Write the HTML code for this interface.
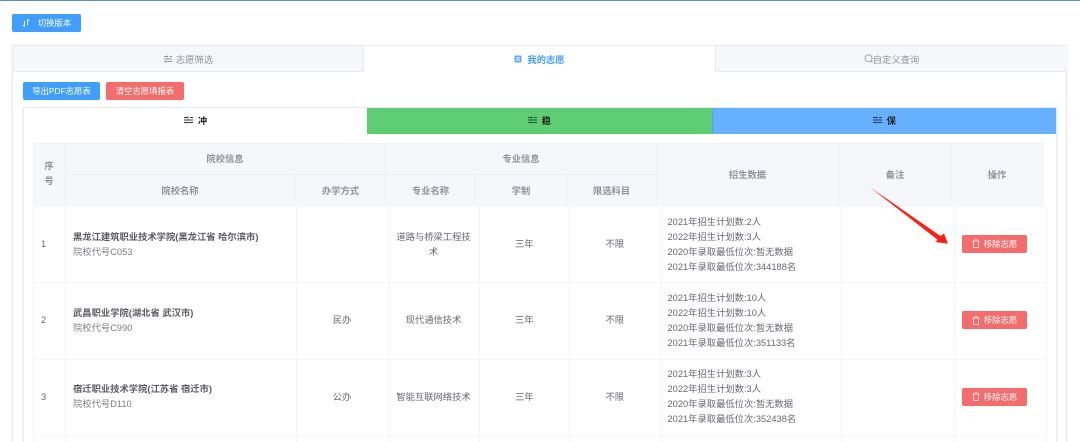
<!DOCTYPE html>
<html lang="zh-CN">
<head>
<meta charset="utf-8">
<title>我的志愿</title>
<style>
*{box-sizing:border-box;margin:0;padding:0}
html,body{width:1080px;height:442px;overflow:hidden;background:#fff}
body{position:relative;font-family:"Liberation Sans","Noto Sans CJK SC",sans-serif;font-size:9.3px;color:#66686e}
#w{position:absolute;left:0;top:0;width:1080px;height:442px;overflow:hidden;filter:blur(.35px)}
.a{position:absolute}
.bar{left:0;top:0;width:1080px;height:1px;background:#5a93bf}
.btn{position:absolute;color:#fff;border-radius:2px;display:flex;align-items:center;justify-content:center;font-size:8.4px;height:18px}
.blue{background:#409eff}
.red{background:#f56c6c}
.outer{left:12px;top:45px;width:1055px;height:397px;border:1px solid #e8eaef;border-bottom:0;box-shadow:0 1px 3px rgba(0,0,0,.08);background:#fff}
.tab{position:absolute;top:46px;height:26px;display:flex;align-items:center;justify-content:center;font-size:9.3px;color:#909399;background:#f5f7fa;border-bottom:1px solid #e8eaef}
.tab svg{margin-right:3px}
.inner{left:23px;top:107px;width:1034px;height:335px;border:1px solid #e8eaef;border-bottom:0;box-shadow:0 1px 3px rgba(0,0,0,.08);background:#fff}
.sub{position:absolute;top:108px;height:26px;padding-bottom:2px;display:flex;align-items:center;justify-content:center;font-size:9.3px;font-weight:bold;color:#222}
.sub svg{margin-right:5px}
table{position:absolute;border-collapse:collapse;table-layout:fixed}
th,td{text-align:center;border:1px solid #f5f6f9;font-weight:normal}
.h{left:33px;top:143px;width:1009px;background:#f5f7fa;color:#909399}
.h th{font-weight:bold;border-color:#f0f2f6;font-size:9.3px;padding-bottom:2px}
.b{left:33px;top:206px;width:1013px}
.b td{height:76.3px;line-height:15px;padding:0;vertical-align:middle;border-color:#f5f6fa}
.b tr.e td{height:7px;border-bottom:0;line-height:0;font-size:0}
.b td.l{text-align:left;padding-left:7px}
.n{font-weight:bold;color:#5a5c62}
.c{color:#7c7e83}
.x{position:absolute;width:65px;height:18px;left:962px;border-radius:2px;background:#f56c6c;color:#fff;font-size:8.4px;display:flex;align-items:center;justify-content:center}
.x svg{margin-right:4px}
</style>
</head>
<body>
<div id="w">
<div class="a bar"></div>
<div class="btn blue" style="left:12px;top:14px;width:69px">
  <svg width="8" height="8" viewBox="0 0 8 8" style="margin-right:8px" fill="none" stroke="#fff" stroke-width=".9"><path d="M2.5 2V7.5L1 6M5.5 6V.5L7 2"/></svg>切换版本
</div>

<div class="a outer"></div>
<div class="tab" style="left:13px;width:351px;border-right:1px solid #e8eaef">
  <svg width="10" height="8" viewBox="0 0 10 8" stroke="#909399" stroke-width=".9"><path d="M1 1.5H5M6.5 1.5H9M4.5 .5V2.5M1 4H9M1 6.5H3M4.5 6.5H9M3.5 5.5V7.5"/></svg>志愿筛选
</div>
<div class="tab" style="left:364px;width:351px;background:#fff;border-bottom:0;color:#409eff;font-weight:bold">
  <svg width="8" height="8" viewBox="0 0 8 8" style="margin-right:5px"><rect x=".5" y=".5" width="7" height="7" rx="1" fill="#5ea8f5"/><path d="M2 3H6M2 5H6" stroke="#fff"/></svg>我的志愿
</div>
<div class="tab" style="left:715px;width:352px;border-left:1px solid #e8eaef">
  <svg width="9" height="9" viewBox="0 0 9 9" fill="none" stroke="#a0a3a8" style="margin-right:0"><circle cx="4.5" cy="4.2" r="3.5"/><path d="M7 7L8.5 8.5"/></svg>自定义查询
</div>

<div class="btn blue" style="left:23px;top:82px;width:77px">导出PDF志愿表</div>
<div class="btn red" style="left:106px;top:82px;width:78px">清空志愿填报表</div>

<div class="a inner"></div>
<div class="sub" style="left:24px;width:343px;background:#fff">
  <svg width="9" height="8" viewBox="0 0 9 8" stroke="#333" stroke-width=".9"><path d="M0 1.5H4.5M6 1.5H9M4 .5V2.5M0 4H9M0 6.5H2.5M4 6.5H9M3 5.5V7.5"/></svg>冲
</div>
<div class="sub" style="left:367px;width:344.5px;background:#5ecd73">
  <svg width="9" height="8" viewBox="0 0 9 8" stroke="#1d4a27" stroke-width=".9"><path d="M0 1.5H4.5M6 1.5H9M4 .5V2.5M0 4H9M0 6.5H2.5M4 6.5H9M3 5.5V7.5"/></svg>稳
</div>
<div class="sub" style="left:711.5px;width:344.5px;background:#66b1ff;border-left:1px solid #5aa0ea">
  <svg width="9" height="8" viewBox="0 0 9 8" stroke="#1b3a5c" stroke-width=".9"><path d="M0 1.5H4.5M6 1.5H9M4 .5V2.5M0 4H9M0 6.5H2.5M4 6.5H9M3 5.5V7.5"/></svg>保
</div>

<table class="h">
  <colgroup><col style="width:31px"><col style="width:231px"><col style="width:90px"><col style="width:90px"><col style="width:91px"><col style="width:90px"><col style="width:182px"><col style="width:113px"><col style="width:91px"></colgroup>
  <tr style="height:31px">
    <th rowspan="2" style="line-height:15px">序<br>号</th>
    <th colspan="2">院校信息</th>
    <th colspan="3">专业信息</th>
    <th rowspan="2">招生数据</th>
    <th rowspan="2">备注</th>
    <th rowspan="2">操作</th>
  </tr>
  <tr style="height:32px">
    <th>院校名称</th><th>办学方式</th><th>专业名称</th><th>学制</th><th>限选科目</th>
  </tr>
</table>

<table class="b">
  <colgroup><col style="width:32px"><col style="width:230.5px"><col style="width:92px"><col style="width:91px"><col style="width:90.5px"><col style="width:90.5px"><col style="width:181.5px"><col style="width:114px"><col style="width:91px"></colgroup>
  <tr>
    <td class="l">1</td>
    <td class="l"><div class="n">黑龙江建筑职业技术学院(黑龙江省 哈尔滨市)</div><div class="c">院校代号C053</div></td>
    <td></td>
    <td style="padding:0 6px">道路与桥梁工程技术</td>
    <td>三年</td><td>不限</td>
    <td class="l">2021年招生计划数:2人<br>2022年招生计划数:3人<br>2020年录取最低位次:暂无数据<br>2021年录取最低位次:344188名</td>
    <td></td><td></td>
  </tr>
  <tr>
    <td class="l">2</td>
    <td class="l"><div class="n">武昌职业学院(湖北省 武汉市)</div><div class="c">院校代号C990</div></td>
    <td>民办</td>
    <td>现代通信技术</td>
    <td>三年</td><td>不限</td>
    <td class="l">2021年招生计划数:10人<br>2022年招生计划数:10人<br>2020年录取最低位次:暂无数据<br>2021年录取最低位次:351133名</td>
    <td></td><td></td>
  </tr>
  <tr>
    <td class="l">3</td>
    <td class="l"><div class="n">宿迁职业技术学院(江苏省 宿迁市)</div><div class="c">院校代号D110</div></td>
    <td>公办</td>
    <td>智能互联网络技术</td>
    <td>三年</td><td>不限</td>
    <td class="l">2021年招生计划数:3人<br>2022年招生计划数:3人<br>2020年录取最低位次:暂无数据<br>2021年录取最低位次:352438名</td>
    <td></td><td></td>
  </tr>
  <tr class="e"><td></td><td></td><td></td><td></td><td></td><td></td><td></td><td></td><td></td></tr>
</table>

<div class="x" style="top:234.5px"><svg width="8" height="9" viewBox="0 0 8 9" fill="none" stroke="#fff" stroke-width=".7"><path d="M.5 2H7.5M3 2V.7H5V2M1.5 2V8.4H6.5V2"/></svg>移除志愿</div>
<div class="x" style="top:311px"><svg width="8" height="9" viewBox="0 0 8 9" fill="none" stroke="#fff" stroke-width=".7"><path d="M.5 2H7.5M3 2V.7H5V2M1.5 2V8.4H6.5V2"/></svg>移除志愿</div>
<div class="x" style="top:387.5px"><svg width="8" height="9" viewBox="0 0 8 9" fill="none" stroke="#fff" stroke-width=".7"><path d="M.5 2H7.5M3 2V.7H5V2M1.5 2V8.4H6.5V2"/></svg>移除志愿</div>

<svg class="a" style="left:0;top:0" width="1080" height="442" viewBox="0 0 1080 442"><path d="M870 187.3L940.5 236L944 233.5L948 243.8L935.5 242L937.6 239.8Z" fill="#fa2014"/></svg>
</div>
</body>
</html>
